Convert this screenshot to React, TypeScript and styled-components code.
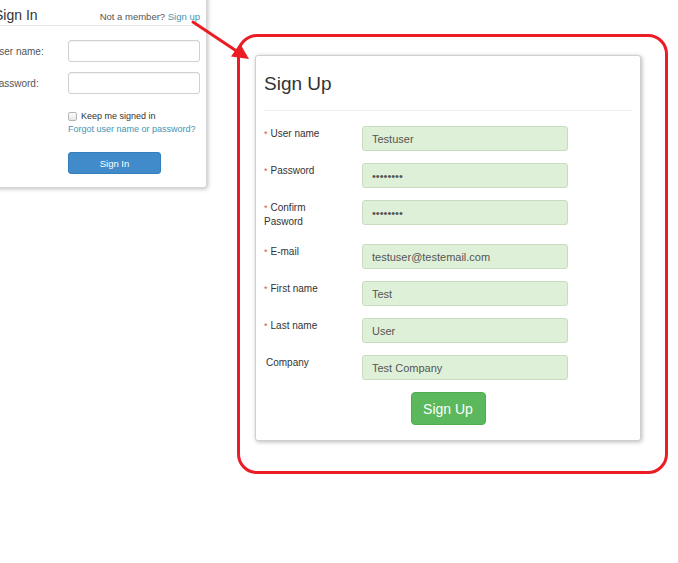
import React from "react";
import styled, { createGlobalStyle } from "styled-components";

const GlobalStyle = createGlobalStyle`
  html, body {
    margin: 0;
    padding: 0;
    background: #ffffff;
  }
  body {
    font-family: "Liberation Sans", Arial, sans-serif;
    color: #333;
  }
  * { box-sizing: border-box; }
`;

const Page = styled.div`
  position: relative;
  width: 678px;
  height: 563px;
  overflow: hidden;
  display: flex;
  align-items: flex-start;
  background: #fff;
`;

/* ---------- Sign in panel ---------- */

const SignInCard = styled.section`
  width: 223px;
  margin-left: -16px;
  margin-top: -10px;
  padding: 0 6px 13px 7px;
  background: #fff;
  border: 1px solid #d4d4d4;
  border-radius: 3px;
  box-shadow: 1px 1px 4px rgba(0, 0, 0, 0.25);
  flex-shrink: 0;
`;

const SignInHeader = styled.header`
  display: flex;
  align-items: baseline;
  justify-content: space-between;
  padding: 16px 0 2px;
  border-bottom: 1px solid #e6e6e6;
`;

const SignInTitle = styled.h2`
  margin: 0 0 0 2px;
  font-size: 14px;
  line-height: 16px;
  font-weight: normal;
  color: #333;
`;

const MemberNote = styled.span`
  font-size: 9.5px;
  color: #555;
`;

const Link = styled.a`
  color: #3f95b5;
  text-decoration: none;
  white-space: nowrap;
`;

const SignInForm = styled.div`
  display: flex;
  flex-direction: column;
  margin-top: 14px;
`;

const SignInRow = styled.div`
  display: grid;
  grid-template-columns: 76px 132px;
  align-items: center;
  margin-bottom: 10px;
`;

const SmallLabel = styled.label`
  font-size: 10px;
  color: #555;
`;

const PlainInput = styled.input`
  width: 132px;
  height: 22px;
  border: 1px solid #d0d0d0;
  border-radius: 3px;
  background: #fff;
  box-shadow: inset 0 1px 1px rgba(0, 0, 0, 0.05);
  outline: none;
`;

const Options = styled.div`
  display: flex;
  flex-direction: column;
  align-items: flex-start;
  margin: 6px 0 0 76px;
  font-size: 9px;
  line-height: 13px;
  white-space: nowrap;
`;

const CheckLine = styled.label`
  display: flex;
  align-items: center;
  gap: 4px;
  color: #333;
`;

const Box = styled.span`
  width: 9px;
  height: 9px;
  border: 1px solid #b5b5b5;
  border-radius: 2px;
  background: linear-gradient(#fdfdfd, #e6e6e6);
`;

const BlueButton = styled.button`
  width: 93px;
  height: 22px;
  margin: 16px 0 0 76px;
  border: 1px solid #357ebd;
  border-radius: 3px;
  background: #428bca;
  color: #fff;
  font-family: "Liberation Sans", Arial, sans-serif;
  font-size: 9.5px;
  padding: 0;
`;

/* ---------- Highlight frame and sign up panel ---------- */

const Highlight = styled.div`
  margin-left: 30px;
  margin-top: 34px;
  padding: 18px 24px 30px 15px;
  border: 3px solid #ec1c24;
  border-radius: 20px;
  flex-shrink: 0;
`;

const SignUpCard = styled.section`
  width: 386px;
  padding: 0 8px 15px 8px;
  background: #fff;
  border: 1px solid #cfcfcf;
  border-radius: 3px;
  box-shadow: 1px 1px 4px rgba(0, 0, 0, 0.28);
`;

const SignUpTitle = styled.h2`
  margin: 0;
  padding: 17px 0 15px;
  font-size: 19px;
  line-height: 22px;
  font-weight: normal;
  color: #333;
  border-bottom: 1px solid #eeeeee;
`;

const FormBody = styled.div`
  display: flex;
  flex-direction: column;
  margin-top: 15px;
`;

const Row = styled.div`
  display: grid;
  grid-template-columns: 98px 206px;
  align-items: start;
  margin-bottom: 12px;
`;

const FieldLabel = styled.label<{ $indent?: boolean }>`
  font-size: 10px;
  line-height: 13px;
  color: #333;
  padding: 1px 0 4px ${(p) => (p.$indent ? "2px" : "0")};
  width: 62px;
`;

const Star = styled.span`
  color: #d9534f;
  margin-right: 3px;
  font-size: 9px;
  line-height: 13px;
`;

const GreenInput = styled.input`
  width: 206px;
  height: 25px;
  padding: 0 9px;
  border: 1px solid #c8dcbf;
  border-radius: 3px;
  background: #dff0d8;
  color: #555;
  font-family: "Liberation Sans", Arial, sans-serif;
  font-size: 11px;
  outline: none;
`;

const Actions = styled.div`
  display: flex;
  justify-content: center;
`;

const GreenButton = styled.button`
  width: 75px;
  height: 33px;
  border: 1px solid #4cae4c;
  border-radius: 4px;
  background: #5cb85c;
  color: #fff;
  font-family: "Liberation Sans", Arial, sans-serif;
  font-size: 14px;
  padding: 0;
`;

const ArrowLayer = styled.svg`
  position: absolute;
  left: 0;
  top: 0;
  pointer-events: none;
`;

type Field = { label: string; value: string; required: boolean };

const fields: Field[] = [
  { label: "User name", value: "Testuser", required: true },
  { label: "Password", value: "••••••••", required: true },
  { label: "Confirm Pasword", value: "••••••••", required: true },
  { label: "E-mail", value: "testuser@testemail.com", required: true },
  { label: "First name", value: "Test", required: true },
  { label: "Last name", value: "User", required: true },
  { label: "Company", value: "Test Company", required: false },
];

export default function App() {
  return (
    <>
      <GlobalStyle />
      <Page>
        <SignInCard>
          <SignInHeader>
            <SignInTitle>Sign In</SignInTitle>
            <MemberNote>
              Not a member? <Link href="#">Sign up</Link>
            </MemberNote>
          </SignInHeader>
          <SignInForm>
            <SignInRow>
              <SmallLabel>User name:</SmallLabel>
              <PlainInput readOnly />
            </SignInRow>
            <SignInRow>
              <SmallLabel>Password:</SmallLabel>
              <PlainInput readOnly type="password" />
            </SignInRow>
            <Options>
              <CheckLine>
                <Box />
                Keep me signed in
              </CheckLine>
              <Link href="#">Forgot user name or password?</Link>
            </Options>
            <BlueButton>Sign In</BlueButton>
          </SignInForm>
        </SignInCard>

        <Highlight>
          <SignUpCard>
            <SignUpTitle>Sign Up</SignUpTitle>
            <FormBody>
              {fields.map((f) => (
                <Row key={f.label}>
                  <FieldLabel $indent={!f.required}>
                    {f.required && <Star>*</Star>}
                    {f.label}
                  </FieldLabel>
                  <GreenInput readOnly value={f.value} />
                </Row>
              ))}
              <Actions>
                <GreenButton>Sign Up</GreenButton>
              </Actions>
            </FormBody>
          </SignUpCard>
        </Highlight>

        <ArrowLayer width="678" height="563" viewBox="0 0 678 563">
          <line x1="193" y1="22" x2="238" y2="52" stroke="#ec1c24" strokeWidth="3" strokeLinecap="round" />
          <polygon points="249,59 231,56.5 240,43.5" fill="#ec1c24" />
        </ArrowLayer>
      </Page>
    </>
  );
}
